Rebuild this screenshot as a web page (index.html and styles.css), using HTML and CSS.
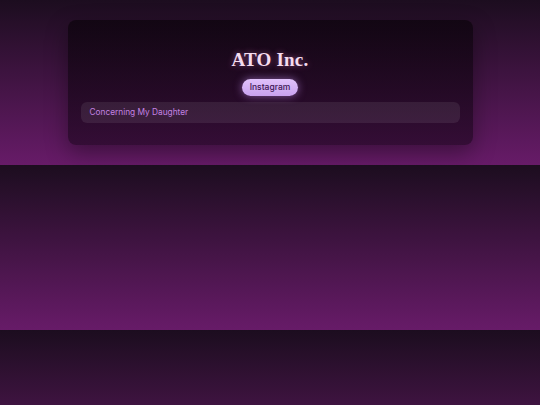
FILE: index.html
```html
<!DOCTYPE html>
<html lang="en">
<head>
  <meta charset="UTF-8" />
  <meta name="viewport" content="width=device-width, initial-scale=1.0"/>
  <title>ATO Inc.</title>
  <link rel="stylesheet" href="styles.css">
</head>
<body>

<div class="card">
  <h1 class="brand">ATO Inc.</h1>
  <div class="links">
    <a class="social-btn" href="#">Instagram</a>
  </div>
  <ul class="posts">
    <li class="post">Concerning My Daughter</li>
  </ul>
</div>

</body>
</html>
```

FILE: styles.css
```css
body {
  margin: 0;
  padding: 20px 0;
  font-family: 'Inter', 'Open Sans', sans-serif;
  background: linear-gradient(to bottom, #1c0d1f, #671b68);
  color: #eee;
}

.card {
  width: 75%;
  margin: 0 auto;
  box-sizing: border-box;
  padding: 28px 13px 22px;
  background: linear-gradient(to bottom, rgba(8,2,8,0.65), rgba(18,3,20,0.55));
  border-radius: 8px;
  box-shadow: 0 8px 22px rgba(0,0,0,0.35);
  text-align: center;
}

.brand {
  margin: 0;
  font-family: 'Liberation Serif', serif;
  font-size: 19px;
  line-height: 23px;
  letter-spacing: 0.2px;
  color: #f4dcef;
  text-shadow: 0 0 6px rgba(255,150,225,0.45);
}

.links {
  display: flex;
  justify-content: center;
  margin-top: 8px;
}

.social-btn {
  display: block;
  height: 17px;
  line-height: 17px;
  padding: 0 8px;
  border-radius: 999px;
  background: linear-gradient(to bottom, #e0c2fa, #c9a2f0);
  color: #3d1654;
  font-size: 8.5px;
  font-weight: 500;
  text-decoration: none;
  box-shadow: 0 0 8px rgba(205,150,255,0.55);
}

.posts {
  list-style: none;
  margin: 6px 0 0;
  padding: 0;
}

.post {
  height: 21px;
  line-height: 21px;
  padding: 0 9px;
  border-radius: 6px;
  background: rgba(255,255,255,0.08);
  color: #c483e2;
  font-size: 8.3px;
  text-align: left;
}
```
